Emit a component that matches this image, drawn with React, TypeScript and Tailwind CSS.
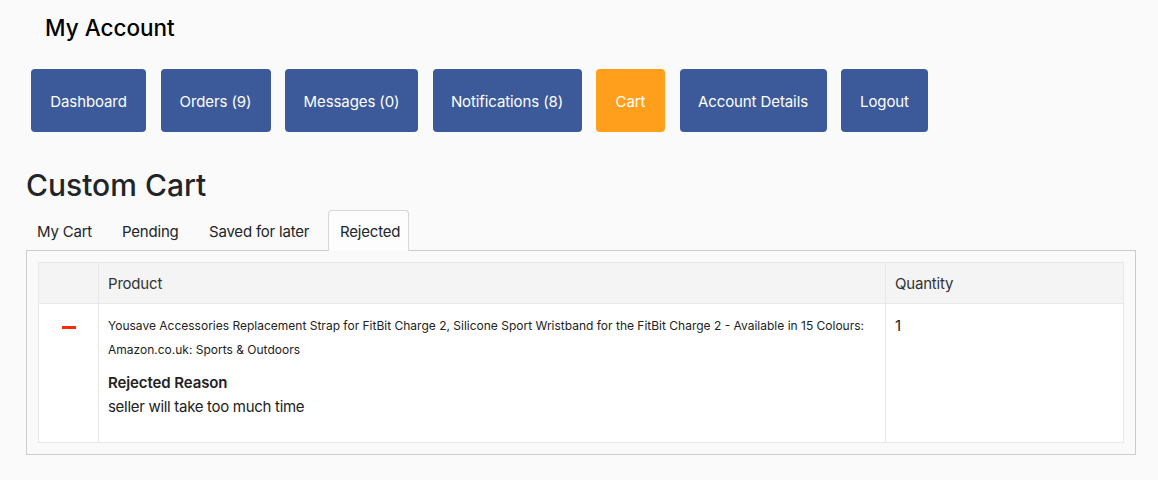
const navItems = [
  { label: "Dashboard", width: "w-[115px]" },
  { label: "Orders (9)", width: "w-[110px]" },
  { label: "Messages (0)", width: "w-[133px]" },
  { label: "Notifications (8)", width: "w-[149px]" },
  { label: "Cart", width: "w-[69px]", active: true },
  { label: "Account Details", width: "w-[147px]" },
  { label: "Logout", width: "w-[87px]" },
]

const tabs = [
  { label: "My Cart", width: "w-[85px]" },
  { label: "Pending", width: "w-[87px]" },
  { label: "Saved for later", width: "w-[130px]" },
  { label: "Rejected", width: "w-[81px]", active: true },
]

export default function App() {
  return (
    <div className="h-[480px] bg-[#fafafa] font-['Inter',sans-serif] text-[#212529]">
      <h2 className="pl-[45px] pt-[14px] text-[22.5px] font-medium leading-[28px] text-black">
        My Account
      </h2>

      {/* account navigation */}
      <nav className="mt-[27px] flex gap-[14.5px] px-[31px]">
        {navItems.map((item) => (
          <a
            key={item.label}
            className={`flex h-[63px] ${item.width} items-center justify-center rounded-[4px] pt-[3px] text-[15px] tracking-[-0.1px] text-white ${
              item.active ? "bg-[#ff9f1c]" : "bg-[#3c5a99]"
            }`}
          >
            {item.label}
          </a>
        ))}
      </nav>

      <section className="pl-[26px] pr-[22px]">
        <h1 className="mt-[35px] text-[30px] font-medium leading-[36px] text-[#212529]">Custom Cart</h1>

        <ul className="mt-[7px] flex">
          {tabs.map((tab) => (
            <li
              key={tab.label}
              className={`relative -mb-px flex h-[41px] ${tab.width} items-center pl-[11px] pt-[3px] text-[15px] tracking-[-0.2px] ${
                tab.active
                  ? "z-10 rounded-t-[4px] border border-b-0 border-[#d6d6d6] bg-[#fdfdfd] pl-[10px]"
                  : ""
              }`}
            >
              {tab.label}
            </li>
          ))}
        </ul>

        <div className="border border-[#cdcdcd] p-[11px]">
          <table className="w-full table-fixed border-collapse bg-white text-left">
            <colgroup>
              <col className="w-[60px]" />
              <col />
              <col className="w-[238px]" />
            </colgroup>
            <thead>
              <tr className="h-[41px] bg-[#f4f4f4] text-[15px] tracking-[-0.2px] text-[#333]">
                <th className="border border-[#e8e8e8] px-[9px] pt-[2px] font-normal"></th>
                <th className="border border-[#e8e8e8] px-[9px] pt-[2px] font-normal">Product</th>
                <th className="border border-[#e8e8e8] px-[9px] pt-[2px] font-normal">Quantity</th>
              </tr>
            </thead>
            <tbody>
              <tr className="align-top">
                <td className="border border-[#e8e8e8] pt-[22px]">
                  <div className="mx-auto h-[3px] w-[14px] bg-[#ff2a0a]" />
                </td>
                <td className="border border-[#e8e8e8] px-[9px] pb-[23px] pt-[10px]">
                  <p className="text-[12px] leading-[24px] text-[#222]">
                    Yousave Accessories Replacement Strap for FitBit Charge 2, Silicone Sport Wristband for the FitBit
                    Charge 2 - Available in 15 Colours: Amazon.co.uk: Sports &amp; Outdoors
                  </p>
                  <h4 className="mt-[9px] text-[15px] font-semibold leading-[24px] tracking-[-0.1px] text-[#222]">
                    Rejected Reason
                  </h4>
                  <p className="text-[15px] leading-[24px] tracking-[-0.3px] text-[#222]">
                    seller will take too much time
                  </p>
                </td>
                <td className="border border-[#e8e8e8] px-[9px] pt-[10px] text-[15px] leading-[24px] text-[#222]">
                  1
                </td>
              </tr>
            </tbody>
          </table>
        </div>
      </section>
    </div>
  )
}
